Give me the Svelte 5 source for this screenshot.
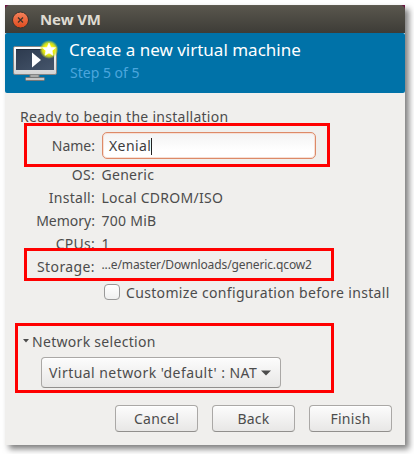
<script>
  const details = [
    { label: 'OS:', value: 'Generic', cls: 'os' },
    { label: 'Install:', value: 'Local CDROM/ISO', cls: 'install' },
    { label: 'Memory:', value: '700 MiB', cls: 'memory' },
    { label: 'CPUs:', value: '1', cls: 'cpus' }
  ];
  let name = $state('Xenial');
</script>

<main>
  <section class="window">
    <div class="titlebar">
      <svg class="close" width="18" height="18" viewBox="0 0 18 18">
        <defs><linearGradient id="orange" x1="0" y1="0" x2="0" y2="1"><stop offset="0" stop-color="#f5835c" /><stop offset="1" stop-color="#df4a1d" /></linearGradient></defs>
        <circle cx="9.500" cy="9" r="8" fill="url(#orange)" stroke="#34332e" stroke-width="1" />
        <path d="M7 6.500l5 5M12 6.500l-5 5" stroke="#403329" stroke-width="1.3" />
      </svg>
      <span class="title">New VM</span>
    </div>
    <header>
      <svg class="monitor" width="48" height="44" viewBox="0 0 48 44">
        <defs>
          <linearGradient id="frame" x1="0" y1="0" x2="0" y2="1"><stop offset="0" stop-color="#fff" /><stop offset="1" stop-color="#d3d3d3" /></linearGradient>
          <linearGradient id="screen" x1="0" y1="0" x2="1" y2="1"><stop offset="0" stop-color="#2d3a4e" /><stop offset="1" stop-color="#46566c" /></linearGradient>
          <radialGradient id="glow"><stop offset="0.5" stop-color="#f4f200" /><stop offset="0.72" stop-color="#dce51b" stop-opacity="0.85" /><stop offset="1" stop-color="#cfe62a" stop-opacity="0" /></radialGradient>
        </defs>
        <path d="M17 34h9v4h-9z" fill="#a9aaa9" stroke="#777" />
        <rect x="12.5" y="37.5" width="19" height="3" rx="1" fill="#c5c5c5" stroke="#777" />
        <rect x="0.5" y="6.5" width="43" height="28" rx="1.5" fill="url(#frame)" stroke="#858585" />
        <rect x="3" y="9" width="38" height="21" fill="url(#screen)" />
        <path d="M3 9h38v1H3z" fill="#202b3b" />
        <path d="M19 12.5v15l9-7.500z" fill="#fff" />
        <circle cx="36" cy="9.500" r="9.500" fill="url(#glow)" />
        <path d="M36 3l1.900 4.200 4.600.5-3.400 3.100.9 4.500-4-2.300-4 2.300.9-4.500-3.400-3.100 4.600-.5z" fill="#fff" stroke="#fff" stroke-width="0.6" />
      </svg>
      <div class="headings">
        <h1><span>Create a new virtual machine</span></h1>
        <p><span>Step 5 of 5</span></p>
      </div>
    </header>

    <div class="body">
      <div class="ready"><span>Ready to begin the installation</span></div>
      <div class="row name-row">
        <span class="label"><span class="l-name">Name:</span></span>
        <div class="entry"><span>{name}</span><i></i></div>
      </div>
      {#each details as d}
        <div class="row">
          <span class="label"><span class="l-{d.cls}">{d.label}</span></span>
          <span>{d.value}</span>
        </div>
      {/each}
      <div class="row">
        <span class="label"><span class="l-storage">Storage:</span></span>
        <span class="path">...e/master/Downloads/generic.qcow2</span>
      </div>
      <div class="check"><i></i><span>Customize configuration before install</span></div>
      <div class="expander">
        <svg width="6" height="4" viewBox="0 0 6 4"><path d="M0 0h6L3 3.500z" fill="#4c4c4c" /></svg>
        <span>Network selection</span>
      </div>
      <div class="combo">
        <span>Virtual network 'default' : NAT</span>
        <svg width="10" height="6" viewBox="0 0 10 6"><path d="M0 0.500h10L5 5.500z" fill="#4c4c4c" /></svg>
      </div>
      <footer>
        <div class="button">Cancel</div>
        <div class="button">Back</div>
        <div class="button">Finish</div>
      </footer>
    </div>
  </section>
  <div class="mark mark-name"></div>
  <div class="mark mark-storage"></div>
  <div class="mark mark-network"></div>
</main>

<style>
  :global(body) { background: #fff; }
  main {
    position: relative;
    box-sizing: border-box;
    width: 414px;
    height: 454px;
    padding: 5px;
    overflow: hidden;
    font: 14px/23px "Noto Sans", "Open Sans", sans-serif;
    letter-spacing: 0.27px;
    color: #4c4c4c;
    white-space: nowrap;
  }
  .window {
    width: 400px;
    height: 440px;
    background: linear-gradient(#6b1442 5px, #f0efed 5px);
    box-shadow: 4px 4px 6px rgba(0, 0, 0, 0.5);
  }
  .titlebar {
    box-sizing: border-box;
    display: flex;
    align-items: center;
    height: 28px;
    padding-left: 6px;
    border-top: 1px solid #5d5a50;
    border-radius: 5px 5px 0 0;
    background: linear-gradient(#59564d, #3d3c37);
  }
  .title { margin-left: 11px; font-size: 15px; font-weight: 700; letter-spacing: -0.1px; color: #dfdbd2; }
  header {
    box-sizing: border-box;
    display: flex;
    height: 60px;
    padding-left: 8px;
    border-radius: 2px;
    background: #0072a8;
  }
  .monitor { margin-top: 7px; }
  .headings { margin-left: 8px; padding-top: 5px; }
  h1 { margin: 0; font-size: 17px; font-weight: 400; line-height: 24px; letter-spacing: 0; color: #fff; }
  p { margin: -1px 0 0 1px; letter-spacing: 0; color: #4ba6dd; }
  .body { padding-top: 13px; }
  .ready { height: 26px; margin-left: 15px; line-height: 22px; }
  .row { display: flex; height: 23px; }
  .label { width: 90px; margin-right: 6.500px; text-align: right; }
  .l-memory { letter-spacing: 0; }
  .l-name { letter-spacing: 0; }
  .l-storage { letter-spacing: 0.4px; }
  .name-row { height: 31px; line-height: 27px; }
  .entry {
    box-sizing: border-box;
    display: flex;
    width: 214px;
    height: 27px;
    padding-left: 6px;
    border: 1px solid #dd8a68;
    border-radius: 5px;
    background: linear-gradient(#f3f3f3, #fff 70%);
    box-shadow: inset 0 0 0 1px #f7dfd5;
    line-height: 25px;
    letter-spacing: 0.4px;
    color: #3c3c3c;
  }
  .name-row .label { margin-right: 7px; }
  .entry i { width: 1px; height: 17px; margin-top: 5px; background: #222; }
  .path { font-size: 12px; line-height: 19px; letter-spacing: -0.11px; }
  .check { display: flex; align-items: center; height: 28px; padding-left: 99px; letter-spacing: 0.34px; }
  .check i {
    box-sizing: border-box;
    width: 16px;
    height: 16px;
    margin-right: 6px;
    border: 1px solid #999;
    border-radius: 4px;
    background: linear-gradient(#fff, #f0f0f0);
  }
  .expander { display: flex; align-items: center; height: 23px; margin-top: 24px; padding-left: 18px; letter-spacing: 0.3px; }
  .expander svg { margin: 0 3px 2px 0; }
  .combo, .button {
    box-sizing: border-box;
    display: flex;
    align-items: center;
    border: 1px solid #aaa8a6;
    border-bottom-color: #918f8d;
    border-radius: 4px;
    background: linear-gradient(#fcfcfc, #e8e7e6);
    box-shadow: inset 0 1px #fff;
  }
  .combo { justify-content: space-between; width: 240px; height: 31px; margin: 4px 0 0 36px; padding: 0 9px 0 7px; letter-spacing: 0.45px; }
  footer { display: flex; justify-content: flex-end; gap: 14px; padding: 17px 13px 0 0; }
  .button { justify-content: center; width: 83px; height: 27px; }
  .mark { position: absolute; box-sizing: border-box; border: 3px solid #f00; }
  .mark-name { left: 24px; top: 123px; width: 306px; height: 44px; }
  .mark-storage { left: 24px; top: 248px; width: 310px; height: 33px; }
  .mark-network { left: 15px; top: 323px; width: 319px; height: 70px; }
</style>
